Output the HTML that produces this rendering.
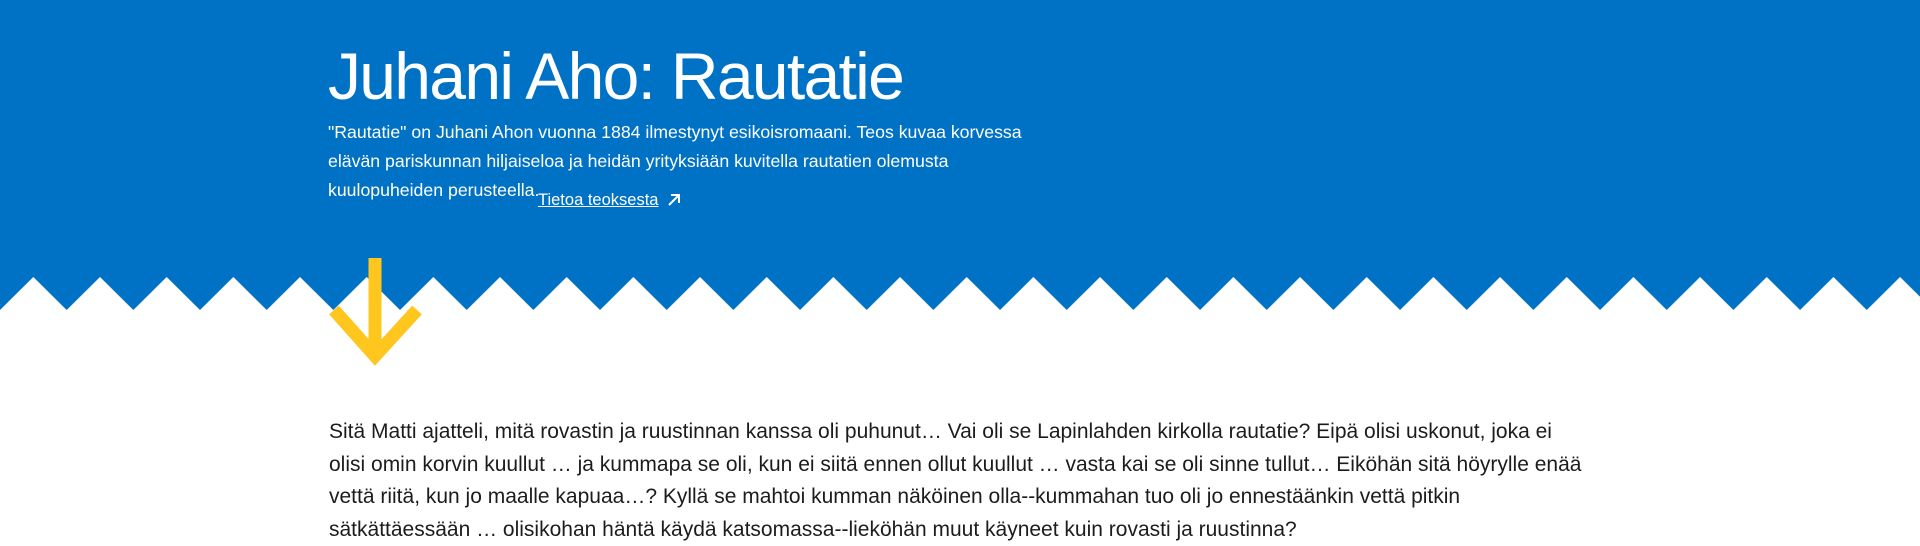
<!DOCTYPE html>
<html><head><meta charset="utf-8"><style>
html,body{margin:0;padding:0;width:1920px;height:545px;overflow:hidden;background:#fff;font-family:"Liberation Sans",sans-serif;}
.hdr{position:absolute;left:0;top:0;width:1920px;height:277px;background:#0072c6;}
h1{position:absolute;left:328px;top:36px;margin:0;font-weight:normal;font-size:66px;letter-spacing:-1.7px;color:#fff;line-height:80px;white-space:nowrap;}
.p{position:absolute;left:328px;top:118px;color:#fff;font-size:17.7px;line-height:29px;white-space:nowrap;}
.lk{position:absolute;left:538px;top:191px;color:#fff;font-size:16.5px;text-decoration:underline;white-space:nowrap;}
.body{position:absolute;left:329px;top:416px;color:#1c1c1c;font-size:21px;line-height:32.5px;white-space:nowrap;}
</style></head><body>
<div class="hdr"></div>
<svg style="position:absolute;left:0;top:276px" width="1920" height="36">
<defs><pattern id="z" patternUnits="userSpaceOnUse" width="66.67" height="36"><polygon fill="#0072c6" points="0,0 66.67,0 66.67,34 33.33,1 0,34"/></pattern></defs>
<rect x="0" y="0" width="1920" height="36" fill="url(#z)"/>
</svg>
<h1>Juhani Aho: Rautatie</h1>
<div class="p">"Rautatie" on Juhani Ahon vuonna 1884 ilmestynyt esikoisromaani. Teos kuvaa korvessa<br>elävän pariskunnan hiljaiseloa ja heidän yrityksiään kuvitella rautatien olemusta<br>kuulopuheiden perusteella.</div>
<div class="lk">Tietoa teoksesta</div>
<svg style="position:absolute;left:667px;top:193px" width="16" height="14"><path d="M2 12 L12 2 M4 2 H12 V10" stroke="#fff" stroke-width="2" fill="none"/></svg>
<svg style="position:absolute;left:320px;top:255px" width="110" height="120">
<path d="M55 3 V100" stroke="#ffc61e" stroke-width="13" fill="none"/>
<path d="M14 55 L55 101 L97 55" stroke="#ffc61e" stroke-width="13" fill="none"/>
</svg>
<div class="body">Sitä Matti ajatteli, mitä rovastin ja ruustinnan kanssa oli puhunut… Vai oli se Lapinlahden kirkolla rautatie? Eipä olisi uskonut, joka ei<br>olisi omin korvin kuullut … ja kummapa se oli, kun ei siitä ennen ollut kuullut … vasta kai se oli sinne tullut… Eiköhän sitä höyrylle enää<br>vettä riitä, kun jo maalle kapuaa…? Kyllä se mahtoi kumman näköinen olla--kummahan tuo oli jo ennestäänkin vettä pitkin<br>sätkättäessään … olisikohan häntä käydä katsomassa--lieköhän muut käyneet kuin rovasti ja ruustinna?</div>
</body></html>
